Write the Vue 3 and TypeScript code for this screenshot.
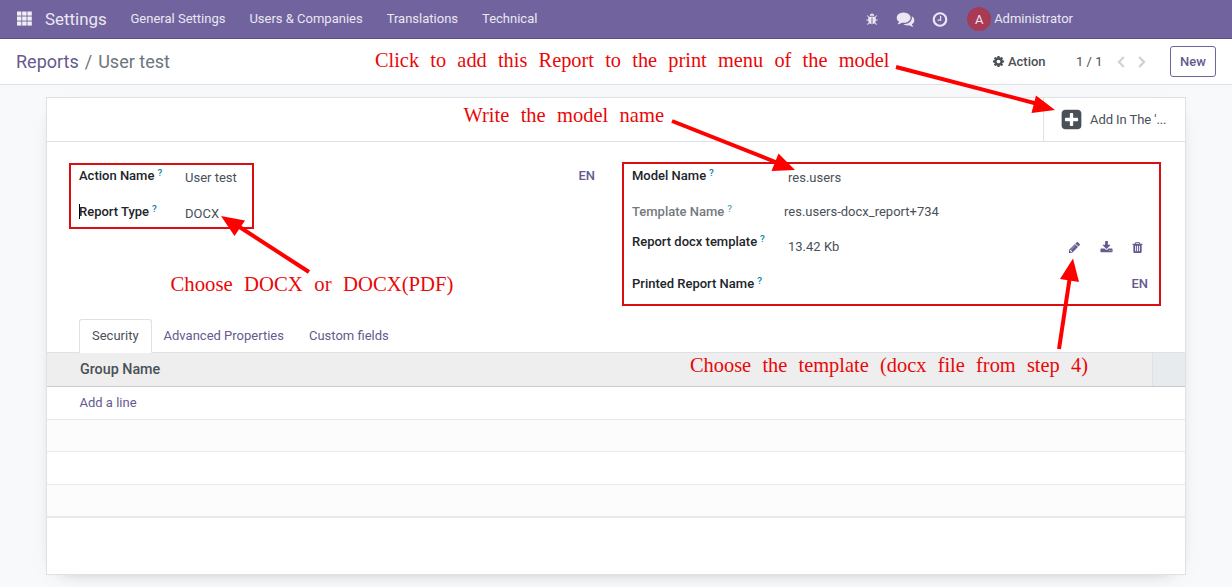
<script setup lang="ts">
interface Field { label: string; value: string; cls: string }

const menus: string[] = ['General Settings', 'Users & Companies', 'Translations', 'Technical']

const leftFields: Field[] = [
  { label: 'Action Name', value: 'User test', cls: 'h36' },
  { label: 'Report Type', value: 'DOCX', cls: 'h36' },
]

const rightFields: Field[] = [
  { label: 'Model Name', value: 'res.users', cls: 'h36' },
  { label: 'Template Name', value: 'res.users-docx_report+734', cls: 'h30 readonly' },
  { label: 'Report docx template', value: '13.42 Kb', cls: 'h42 file' },
  { label: 'Printed Report Name', value: '', cls: 'h36' },
]

const icons: Record<string, string> = {
  bug: 'M1696 960q0 26-19 45t-45 19h-224q0 171-67 290l208 209q19 19 19 45t-19 45q-18 19-45 19t-45-19l-198-197q-5 5-15 13t-42 28.5-65 36.5-82 29-97 13v-896h-128v896q-51 0-101.5-13.5t-87-33-66-39-43.5-32.5l-15-14-183 207q-20 21-48 21-24 0-43-16-19-18-20.5-44.5t15.5-46.5l202-227q-58-114-58-274h-224q-26 0-45-19t-19-45 19-45 45-19h224v-294l-173-173q-19-19-19-45t19-45 45-19 45 19l173 173h844l173-173q19-19 45-19t45 19 19 45-19 45l-173 173v294h224q26 0 45 19t19 45zm-480-576h-640q0-133 93.500-226.500t226.500-93.500 226.500 93.500 93.500 226.500z',
  comments: 'M1408 768q0 139-94 257t-256.500 186.500-353.500 68.500q-86 0-176-16-124 88-278 128-36 9-86 16h-3q-11 0-20.500-8t-11.500-21q-1-3-1-6.500t.5-6.500 2-6l2.500-5 3.500-5.500 4-5 4.500-5 4-4.500q5-6 23-25t26-29.500 22.500-29 25-38.500 20.500-44q-124-72-195-177t-71-224q0-139 94-257t256.500-186.500 353.500-68.500 353.500 68.500 256.500 186.500 94 257zm384 256q0 120-71 224.500t-195 176.500q10 24 20.500 44t25 38.500 22.500 29 26 29.500 23 25q1 1 4 4.500t4.500 5 4 5 3.500 5.500l2.500 5 2 6 .5 6.500-1 6.500q-3 14-13 22t-22 7q-50-7-86-16-154-40-278-128-90 16-176 16-271 0-472-132 58 4 88 4 161 0 309-45t264-129q125-92 192-212t67-254q0-77-23-152 129 71 204 178t75 230z',
  clock: 'M1024 544v448q0 14-9 23t-23 9h-320q-14 0-23-9t-9-23v-64q0-14 9-23t23-9h224v-352q0-14 9-23t23-9h64q14 0 23 9t9 23zm416 352q0-148-73-273t-198-198-273-73-273 73-198 198-73 273 73 273 198 198 273 73 273-73 198-198 73-273zm224 0q0 209-103 385.500t-279.500 279.500-385.500 103-385.500-103-279.500-279.500-103-385.500 103-385.500 279.500-279.500 385.500-103 385.500 103 279.500 279.500 103 385.500z',
  cog: 'M1152 896q0-106-75-181t-181-75-181 75-75 181 75 181 181 75 181-75 75-181zm512-109v222q0 12-8 23t-20 13l-185 28q-19 54-39 91 35 50 107 138 10 12 10 25t-9 23q-27 37-99 108t-94 71q-12 0-26-9l-138-108q-44 23-91 38-16 136-29 186-7 28-36 28h-222q-14 0-24.500-8.500t-11.500-21.500l-28-184q-49-16-90-37l-141 107q-10 9-25 9-14 0-25-11-126-114-165-168-7-10-7-23 0-12 8-23 15-21 51-66.500t54-70.500q-27-50-41-99l-183-27q-13-2-21-12.500t-8-23.500v-222q0-12 8-23t19-13l186-28q14-46 39-92-40-57-107-138-10-12-10-24 0-10 9-23 26-36 98.500-107.500t94.500-71.500q13 0 26 10l138 107q44-23 91-38 16-136 29-186 7-28 36-28h222q14 0 24.500 8.500t11.500 21.500l28 184q49 16 90 37l142-107q9-9 24-9 13 0 25 10 129 119 165 170 7 8 7 22 0 12-8 23-15 21-51 66.500t-54 70.500q26 50 41 98l183 28q13 2 21 12.500t8 23.500z',
  plus: 'M1408 960v-128q0-26-19-45t-45-19h-320v-320q0-26-19-45t-45-19h-128q-26 0-45 19t-19 45v320h-320q-26 0-45 19t-19 45v128q0 26 19 45t45 19h320v320q0 26 19 45t45 19h128q26 0 45-19t19-45v-320h320q26 0 45-19t19-45zm256-544v960q0 119-84.500 203.500t-203.500 84.500h-960q-119 0-203.500-84.500t-84.500-203.500v-960q0-119 84.500-203.500t203.500-84.500h960q119 0 203.500 84.500t84.500 203.500z',
  pencil: 'M491 1536l91-91-235-235-91 91v107h128v128h107zm523-928q0-22-22-22-10 0-17 7l-542 542q-7 7-7 17 0 22 22 22 10 0 17-7l542-542q7-7 7-17zm-54-192l416 416-832 832h-416v-416zm683 96q0 53-37 90l-166 166-416-416 166-165q36-38 90-38 53 0 91 38l235 234q37 39 37 91z',
  download: 'M1344 1344q0-26-19-45t-45-19-45 19-19 45 19 45 45 19 45-19 19-45zm256 0q0-26-19-45t-45-19-45 19-19 45 19 45 45 19 45-19 19-45zm128-224v320q0 40-28 68t-68 28h-1472q-40 0-68-28t-28-68v-320q0-40 28-68t68-28h465l135 136q58 56 136 56t136-56l136-136h464q40 0 68 28t28 68zm-325-569q17 41-14 70l-448 448q-18 19-45 19t-45-19l-448-448q-31-29-14-70 17-39 59-39h256v-448q0-26 19-45t45-19h256q26 0 45 19t19 45v448h256q42 0 59 39z',
  trash: 'M704 1376v-704q0-14-9-23t-23-9h-64q-14 0-23 9t-9 23v704q0 14 9 23t23 9h64q14 0 23-9t9-23zm256 0v-704q0-14-9-23t-23-9h-64q-14 0-23 9t-9 23v704q0 14 9 23t23 9h64q14 0 23-9t9-23zm256 0v-704q0-14-9-23t-23-9h-64q-14 0-23 9t-9 23v704q0 14 9 23t23 9h64q14 0 23-9t9-23zm-544-992h448l-48-117q-7-9-17-11h-317q-10 2-17 11zm928 32v64q0 14-9 23t-23 9h-96v948q0 83-47 143.500t-113 60.500h-832q-66 0-113-58.500t-47-141.500v-952h-96q-14 0-23-9t-9-23v-64q0-14 9-23t23-9h309l70-167q15-37 54-63t79-26h320q40 0 79 26t54 63l70 167h309q14 0 23 9t9 23z',
}

const notes = [
  { text: 'Click to add this Report to the print menu of the model', x: 375, y: 67, w: 514.500 },
  { text: 'Write the model name', x: 463.500, y: 122, w: 200.500 },
  { text: 'Choose DOCX or DOCX(PDF)', x: 170.500, y: 291, w: 283 },
  { text: 'Choose the template (docx file from step 4)', x: 690, y: 372, w: 398 },
]

const arrows = [
  { line: 'M896 67L1038 104', head: '1055,110 1036,95.500 1031.500,113' },
  { line: 'M672 121L778 163', head: '795,170 778.500,153.500 771.500,171' },
  { line: 'M309 272L238 226', head: '221,216 245,220.500 234.500,236' },
  { line: 'M1059 349L1070 276', head: '1073,258.500 1060,279 1079,282' },
]
</script>

<template>
  <div class="page">
    <header class="navbar">
      <svg class="apps" viewBox="0 0 15 14">
        <template v-for="r in 3" :key="r">
          <rect v-for="c in 3" :key="c" :x="(c - 1) * 5.200" :y="(r - 1) * 5" width="4.400" height="4.100" />
        </template>
      </svg>
      <span class="brand">Settings</span>
      <nav class="menus"><span v-for="m in menus" :key="m">{{ m }}</span></nav>
      <div class="systray">
        <svg class="i-bug" viewBox="0 0 1792 1792"><path :d="icons.bug" /></svg>
        <svg class="i-chat" viewBox="0 0 1792 1792"><path :d="icons.comments" /></svg>
        <svg class="i-clock" viewBox="0 0 1792 1792"><path :d="icons.clock" /></svg>
        <span class="avatar">A</span>
        <span class="user">Administrator</span>
      </div>
    </header>

    <div class="panel">
      <div class="crumbs"><a>Reports</a><i>/</i><span>User test</span></div>
      <div class="panel-right">
        <svg class="i-cog" viewBox="0 0 1792 1792"><path :d="icons.cog" /></svg>
        <b class="action">Action</b>
        <span class="pager">1 / 1</span>
        <svg class="chev" viewBox="0 0 8 12"><path d="M6.800 1L2 6l4.800 5" /></svg>
        <svg class="chev next" viewBox="0 0 8 12"><path d="M1.200 1L6 6l-4.800 5" /></svg>
        <button class="new">New</button>
      </div>
    </div>

    <main class="sheet">
      <div class="stats">
        <div class="stat">
          <svg viewBox="0 0 1792 1792"><path :d="icons.plus" /></svg>
          <span>Add In The '...</span>
        </div>
      </div>

      <div class="groups">
        <section class="group left">
          <div v-for="(f, i) in leftFields" :key="f.label" class="row" :class="f.cls">
            <label>{{ f.label }}<sup>?</sup></label>
            <span class="value">{{ f.value }}</span>
            <span v-if="i === 0" class="lang">EN</span>
            <span v-if="i === 1" class="caret"></span>
          </div>
        </section>
        <section class="group right">
          <div v-for="(f, i) in rightFields" :key="f.label" class="row" :class="f.cls">
            <label>{{ f.label }}<sup>?</sup></label>
            <span class="value">{{ f.value }}</span>
            <span v-if="i === 2" class="tools">
              <svg viewBox="0 0 1792 1792"><path :d="icons.pencil" /></svg>
              <svg viewBox="0 0 1792 1792"><path :d="icons.download" /></svg>
              <svg viewBox="0 0 1792 1792"><path :d="icons.trash" /></svg>
            </span>
            <span v-if="i === 3" class="lang">EN</span>
          </div>
        </section>
      </div>

      <div class="tabs">
        <span class="tab active">Security</span>
        <span class="tab">Advanced Properties</span>
        <span class="tab">Custom fields</span>
      </div>

      <div class="table">
        <div class="thead"><span>Group Name</span><span class="opt"></span></div>
        <div class="line r1"><a>Add a line</a></div>
        <div class="line r2 odd"></div>
        <div class="line r3"></div>
        <div class="line r4 odd"></div>
      </div>
    </main>

    <svg class="overlay" viewBox="0 0 1232 587">
      <rect class="box" x="70" y="164" width="183" height="64" />
      <rect class="box" x="623" y="163" width="537" height="142" />
      <g v-for="a in arrows" :key="a.line">
        <path class="shaft" :d="a.line" />
        <polygon :points="a.head" />
      </g>
      <text v-for="n in notes" :key="n.text" :x="n.x" :y="n.y" :textLength="n.w" lengthAdjust="spacingAndGlyphs">{{ n.text }}</text>
    </svg>
  </div>
</template>

<style>
body { margin: 0; overflow: hidden; }
</style>

<style scoped>
* { box-sizing: border-box; }
.page {
  position: relative; width: 1232px; height: 587px; overflow: hidden;
  background: #f8f9fb; color: #495057;
  font: 13px/20px Roboto, "Noto Sans", sans-serif;
}
svg { display: block; flex: none; fill: currentColor; }

.navbar {
  display: flex; align-items: center; height: 39px; padding: 0 159px 0 17px;
  background: #71639e; border-bottom: 1px solid #5a4f7f; color: #eae7f2; white-space: nowrap;
}
.apps { width: 15px; height: 15px; margin-top: -2px; color: #f1eff6; }
.brand { font-size: 16.900px; margin-left: 13px; width: 85.500px; }
.menus { display: flex; gap: 24px; }
.systray { display: flex; align-items: center; margin-left: auto; }
.i-bug { width: 13px; height: 13px; margin-right: 18px; }
.i-chat { width: 18px; height: 18px; margin-right: 17px; }
.i-clock { width: 17px; height: 17px; margin-right: 18px; }
.i-bug, .i-chat, .i-clock { transform: translateX(-.5px); }
.avatar {
  width: 24px; height: 24px; border-radius: 50%; margin-right: 3px;
  background: #a83a55; text-align: center; line-height: 25px; font-size: 13px;
}

.panel {
  display: flex; align-items: center; height: 46px; padding: 0 16px;
  background: #fff; border-bottom: 1px solid #dee2e6; white-space: nowrap;
}
.crumbs { font-size: 18px; color: #6c757d; }
.crumbs a { color: #66598f; }
.crumbs i { font-style: normal; margin: 0 6px; }
.panel-right { display: flex; align-items: center; margin-left: auto; }
.i-cog { width: 13px; height: 13px; }
.action { font-weight: 500; margin: 0 30.500px 0 3px; }
.pager { margin-right: 14px; }
.chev { width: 8px; height: 12px; fill: none; stroke: #ced3d8; stroke-width: 2.400; }
.chev.next { margin: 0 24px 0 13.500px; }
.new {
  width: 46px; height: 31px; padding: 0; border: 1px solid #71639e; border-radius: 3px;
  background: #fff; color: #66598f; font: 500 13px Roboto, sans-serif;
}

.sheet {
  width: 1140px; height: 478px; margin: 12px 0 0 46px;
  background: #fff; border: 1px solid #dee2e6; box-shadow: 0 5px 20px -15px rgba(0, 0, 0, .6);
}
.stats { display: flex; justify-content: flex-end; height: 44px; border-bottom: 1px solid #dee2e6; }
.stat { display: flex; align-items: center; width: 142px; padding-left: 16px; border-left: 1px solid #dee2e6; white-space: nowrap; }
.stat svg { width: 23px; height: 23px; margin-right: 7px; }
.stat span { letter-spacing: -.080px; }

.groups { display: flex; height: 177px; padding: 24px 37px 0 32px; }
.left { width: 553px; padding-right: 37px; }
.right { flex: 1; }
.row { display: flex; position: relative; white-space: nowrap; }
.h36 { height: 36px; }
.h30 { height: 30px; }
.h42 { height: 42px; }
label { width: 156px; color: #212529; font-weight: 500; }
.left label { width: 106px; }
.value { padding-top: 2px; }
.readonly label { width: 152px; color: #75797d; }
.readonly .value { padding-top: 0; }
.file .value { padding-top: 5px; }
sup { margin-left: 3px; font-size: 9.750px; line-height: 0; color: #0180a5; vertical-align: 4px; }
.readonly sup { opacity: .7; }
.lang { margin-left: auto; color: #66598f; font-weight: 500; }
.caret { position: absolute; left: 0; top: 2px; width: 1px; height: 15px; background: #000; }
.tools { display: flex; gap: 18.500px; margin: 9px 4px 0 auto; color: #66598f; }
.tools svg { width: 13px; height: 13px; }

.tabs { display: flex; height: 34px; padding-left: 32px; margin-bottom: -1px; position: relative; }
.tab { margin-right: -1px; padding: 6px 12px; color: #66598f; border: 1px solid transparent; white-space: nowrap; }
.tab.active { background: #fff; color: #495057; border-color: #dee2e6; border-bottom-color: #fff; border-radius: 3px 3px 0 0; }

.thead {
  display: flex; justify-content: space-between; height: 35px; padding-left: 33px;
  background: #eee; border-top: 1px solid #dee2e6; border-bottom: 1px solid #c9cccf;
  font-size: 14.300px; line-height: 33px; font-weight: 500;
}
.opt { width: 33px; background: #e7ebee; border-left: 1px solid #dee2e6; }
.line { height: 33px; border-bottom: 1px solid #e7e9eb; padding-left: 32.500px; line-height: 32px; }
.line a { color: #66598f; }
.line.r2 { height: 32px; }
.line.r4 { height: 33px; border-bottom-width: 2px; }
.odd { background: #fcfcfc; }

.overlay { position: absolute; left: 0; top: 0; width: 1232px; height: 587px; fill: #f00; }
.box { fill: none; stroke: #db0d10; stroke-width: 2; }
.shaft { stroke: #f00; stroke-width: 4; fill: none; }
.overlay text { font: 21.500px "Liberation Serif", serif; word-spacing: 6.500px; fill: #ea0709; }
</style>
